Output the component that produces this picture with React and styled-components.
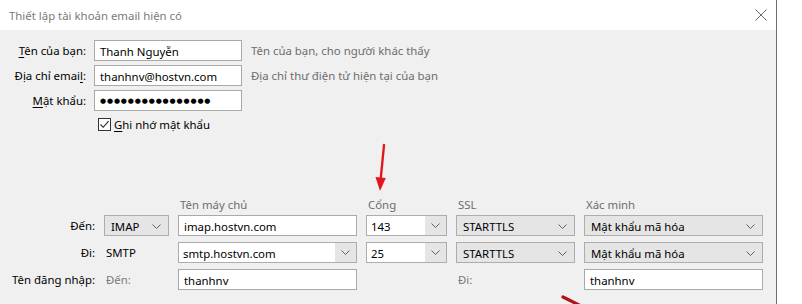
import styled, { createGlobalStyle } from "styled-components";

const GlobalStyle = createGlobalStyle`
    html, body {
        margin: 0;
        padding: 0;
        background: #ffffff;
    }
    body {
        font-family: "Noto Sans", "Open Sans", sans-serif;
        font-size: 11.4px;
        color: #000;
    }
`
const Screen = styled.div`
    position: relative;
    width: 802px;
    height: 304px;
    display: flex;
    overflow: hidden;
    background: #ffffff;
`
const Dialog = styled.div`
    width: 776px;
    border-right: 1px solid #6f6f6f;
    display: flex;
    flex-direction: column;
    background: #f0f0f0;
`
const TitleBar = styled.div`
    height: 30px;
    flex-shrink: 0;
    background: #ffffff;
    display: flex;
    align-items: center;
    justify-content: space-between;
    padding: 0 9px 0 9px;
    color: #7a7a7a;
`
const CloseBtn = styled.div`
    width: 12px;
    height: 12px;
    display: flex;
    align-items: center;
    justify-content: center;
`
const Body = styled.div`
    display: flex;
    flex-direction: column;
    padding-top: 10px;
`
const Identity = styled.div`
    display: grid;
    grid-template-columns: 86px 148px auto;
    column-gap: 8px;
    row-gap: 4px;
    align-items: center;
`
const Label = styled.div`
    white-space: nowrap;
    color: ${p => p.$muted ? "#7a7a7a" : "#000"};
    text-align: right;
`
const Key = styled.span`
    text-decoration: underline;
    text-underline-offset: 2px;
`
const Field = styled.div`
    height: 21px;
    box-sizing: border-box;
    border: 1px solid #a9a9a9;
    background: #ffffff;
    display: flex;
    align-items: center;
    padding: 1px 0 0 5px;
    white-space: nowrap;
    overflow: hidden;
`
const Dots = styled.span`
    font-family: "DejaVu Sans", sans-serif;
    font-size: 7px;
    letter-spacing: 0.85px;
`
const Hint = styled.div`
    color: #6d6d6d;
    padding-left: 1px;
`
const Remember = styled.label`
    grid-column: 2 / 4;
    display: flex;
    align-items: center;
    gap: 3px;
    height: 18px;
    padding-left: 4px;
`
const Check = styled.span`
    width: 13px;
    height: 13px;
    box-sizing: border-box;
    border: 1px solid #333;
    background: #fff;
    display: flex;
    align-items: center;
    justify-content: center;
`
const Servers = styled.div`
    margin-top: 64px;
    display: grid;
    grid-template-columns: 95px 65px 179px 81px 119px 179px;
    column-gap: 9px;
    row-gap: 6px;
    align-items: center;
`
const Head = styled.div`
    color: #6d6d6d;
    height: 15px;
    line-height: 15px;
    padding-left: 2px;
    margin-bottom: -3px;
`
const Select = styled.div`
    height: 21px;
    box-sizing: border-box;
    border: 1px solid #adadad;
    background: #e5e5e5;
    display: flex;
    align-items: center;
    justify-content: space-between;
    padding: 1px 7px 0 6px;
    white-space: nowrap;
`
const Combo = styled.div`
    height: 21px;
    box-sizing: border-box;
    border: 1px solid #adadad;
    background: #ffffff;
    display: flex;
    align-items: stretch;
`
const ComboText = styled.div`
    flex: 1;
    display: flex;
    align-items: center;
    padding: 1px 0 0 4px;
    white-space: nowrap;
`
const ComboBtn = styled.div`
    width: 21px;
    background: #e5e5e5;
    display: flex;
    align-items: center;
    justify-content: center;
`
const Plain = styled.div`
    padding-left: 2px;
    color: ${p => p.$muted ? "#7a7a7a" : "#000"};
`
const Arrow = styled.svg`
    position: absolute;
    left: ${p => p.$x}px;
    top: ${p => p.$y}px;
    overflow: visible;
`

const Chevron = () => (
    <svg width="9" height="5" viewBox="0 0 9 5">
        <path d="M0.5 0.5 L4.5 4.5 L8.5 0.5" fill="none" stroke="#606060" strokeWidth="1" />
    </svg>
);

const Dropdown = ({ children }) => (
    <Select>
        <span>{children}</span>
        <Chevron />
    </Select>
);

const ComboBox = ({ children }) => (
    <Combo>
        <ComboText>{children}</ComboText>
        <ComboBtn><Chevron /></ComboBtn>
    </Combo>
);

const App = () => {
    return (
        <Screen>
            <GlobalStyle />
            <Dialog>
                <TitleBar>
                    <span>Thiết lập tài khoản email hiện có</span>
                    <CloseBtn>
                        <svg width="12" height="12" viewBox="0 0 12 12">
                            <path d="M0.5 0.5 L11.5 11.5 M11.5 0.5 L0.5 11.5" stroke="#6a6a6a" strokeWidth="1" />
                        </svg>
                    </CloseBtn>
                </TitleBar>
                <Body>
                    <Identity>
                        <Label><Key>T</Key>ên của bạn:</Label>
                        <Field>Thanh Nguyễn</Field>
                        <Hint>Tên của bạn, cho người khác thấy</Hint>

                        <Label>Địa chỉ emai<Key>l</Key>:</Label>
                        <Field>thanhnv@hostvn.com</Field>
                        <Hint>Địa chỉ thư điện tử hiện tại của bạn</Hint>

                        <Label><Key>M</Key>ật khẩu:</Label>
                        <Field><Dots>●●●●●●●●●●●●●●●●</Dots></Field>
                        <div />

                        <div />
                        <Remember>
                            <Check>
                                <svg width="11" height="11" viewBox="0 0 11 11">
                                    <path d="M1.5 5.5 L4.2 8.3 L9.6 2.2" fill="none" stroke="#222" strokeWidth="1.1" />
                                </svg>
                            </Check>
                            <span><Key>G</Key>hi nhớ mật khẩu</span>
                        </Remember>
                    </Identity>

                    <Servers>
                        <div />
                        <div />
                        <Head>Tên máy chủ</Head>
                        <Head>Cổng</Head>
                        <Head>SSL</Head>
                        <Head>Xác minh</Head>

                        <Label>Đến:</Label>
                        <Dropdown>IMAP</Dropdown>
                        <Field>imap.hostvn.com</Field>
                        <ComboBox>143</ComboBox>
                        <Dropdown>STARTTLS</Dropdown>
                        <Dropdown>Mật khẩu mã hóa</Dropdown>

                        <Label>Đi:</Label>
                        <Plain>SMTP</Plain>
                        <ComboBox>smtp.hostvn.com</ComboBox>
                        <ComboBox>25</ComboBox>
                        <Dropdown>STARTTLS</Dropdown>
                        <Dropdown>Mật khẩu mã hóa</Dropdown>

                        <Label>Tên đăng nhập:</Label>
                        <Plain $muted>Đến:</Plain>
                        <Field>thanhnv</Field>
                        <div />
                        <Plain $muted>Đi:</Plain>
                        <Field>thanhnv</Field>
                    </Servers>
                </Body>
            </Dialog>

            <Arrow $x={374} $y={144} width="16" height="50" viewBox="0 0 16 50">
                <path d="M10 1 L6.6 36" stroke="#e3161c" strokeWidth="2.4" strokeLinecap="round" />
                <path d="M1.5 33 L6 47 L11.8 34 Z" fill="#e3161c" />
            </Arrow>
            <Arrow $x={560} $y={294} width="20" height="12" viewBox="0 0 20 12">
                <path d="M3 3 L19 11" stroke="#b3131c" strokeWidth="3.2" strokeLinecap="round" />
            </Arrow>
        </Screen>
    );
};

export default App;
